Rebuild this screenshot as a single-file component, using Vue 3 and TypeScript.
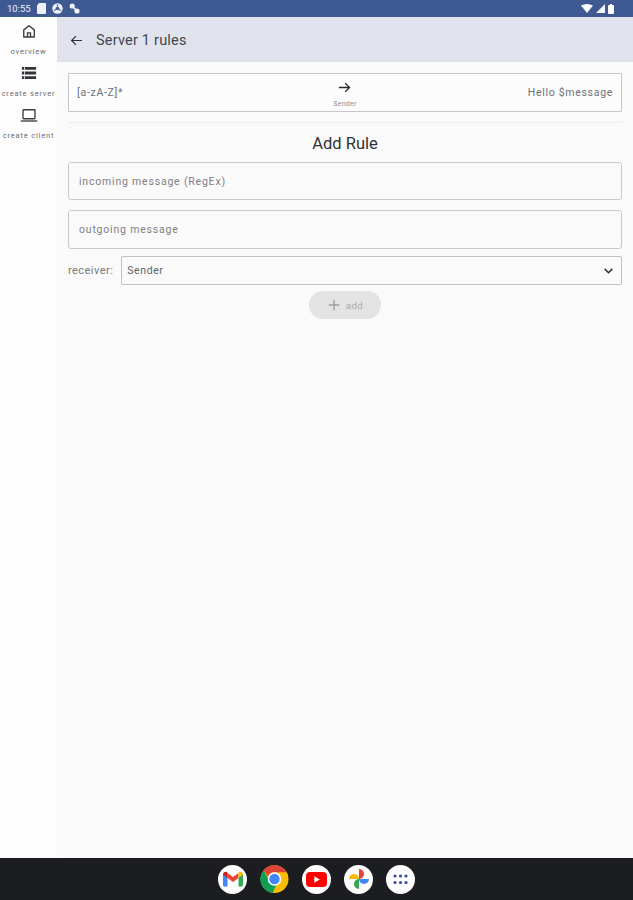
<script setup lang="ts">
const navItems: { label: string; icon: string }[] = [
  { label: 'overview', icon: 'home' },
  { label: 'create server', icon: 'list' },
  { label: 'create client', icon: 'laptop' },
]
</script>

<template>
  <div class="screen">
    <div class="status">
      <div class="status-left">
        <span class="time">10:55</span>
        <svg width="9" height="11" viewBox="0 0 9 11"><path d="M2 0h6a1 1 0 0 1 1 1v9a1 1 0 0 1-1 1H1a1 1 0 0 1-1-1V2.500z" fill="#eef1f8"/></svg>
        <svg width="11" height="11" viewBox="0 0 11 11"><circle cx="5.500" cy="5.500" r="5.200" fill="#eef1f8"/><circle cx="5.500" cy="5.500" r="1.800" fill="#3f5a92"/><path d="M5.500 1.500v2M2 7.500l1.800-1M9 7.500l-1.800-1" stroke="#3f5a92" stroke-width="1.200"/></svg>
        <svg width="11" height="11" viewBox="0 0 11 11"><circle cx="3.200" cy="3" r="2.600" fill="#eef1f8"/><circle cx="8" cy="8" r="2.600" fill="#eef1f8"/><path d="M3.500 3.500 8 8" stroke="#eef1f8" stroke-width="1.600"/></svg>
      </div>
      <div class="status-right">
        <svg width="12" height="9" viewBox="0 0 12 9"><path d="M0 1.500Q6-1.500 12 1.500L6 9z" fill="#fff"/></svg>
        <svg width="9" height="9" viewBox="0 0 9 9"><path d="M9 0v9H0z" fill="#f4f6fb"/></svg>
        <svg width="6" height="10" viewBox="0 0 6 10"><path d="M1 1h1V0h2v1h1a1 1 0 0 1 1 1v7a1 1 0 0 1-1 1H1a1 1 0 0 1-1-1V2a1 1 0 0 1 1-1z" fill="#fff"/></svg>
      </div>
    </div>

    <div class="main">
      <nav class="nav">
        <div v-for="item in navItems" :key="item.label" class="nav-item">
          <svg v-if="item.icon === 'home'" class="nav-icon" width="18" height="18" viewBox="0 0 24 24" fill="none" stroke="#3a3c40" stroke-width="1.800"><path d="M5 10.500 12 5l7 5.500V20H5z" stroke-linejoin="round"/><path d="M10 20v-5.500h4V20" /></svg>
          <svg v-else-if="item.icon === 'list'" class="nav-icon" width="18" height="18" viewBox="0 0 24 24" fill="#33353a"><path d="M2.500 4h3v3.800h-3zM6.500 4h15v3.800h-15zM2.500 10.100h3v3.800h-3zM6.500 10.100h15v3.800h-15zM2.500 16.200h3V20h-3zM6.500 16.200h15V20h-15z"/></svg>
          <svg v-else class="nav-icon" width="18" height="18" viewBox="0 0 24 24" fill="none" stroke="#3a3c40" stroke-width="1.800"><rect x="4" y="5" width="16" height="12" rx="1"/><path d="M1 20h22"/></svg>
          <span class="nav-label">{{ item.label }}</span>
        </div>
      </nav>

      <div class="page">
        <header class="topbar">
          <svg width="13" height="13" viewBox="0 0 24 24" fill="none" stroke="#2c2e33" stroke-width="2.200"><path d="M22 12H3M11 4l-8 8 8 8"/></svg>
          <span class="title">Server 1 rules</span>
        </header>

        <div class="content">
          <div class="rule">
            <span class="rule-in">[a-zA-Z]*</span>
            <div class="rule-mid">
              <svg width="15" height="15" viewBox="0 0 24 24" fill="none" stroke="#26282c" stroke-width="2.200"><path d="M3 12h17M13 5l7 7-7 7"/></svg>
              <span class="rule-recv">Sender</span>
            </div>
            <span class="rule-out">Hello $message</span>
          </div>
          <div class="divider"></div>
          <h2 class="heading">Add Rule</h2>
          <div class="field first">incoming message (RegEx)</div>
          <div class="field second">outgoing message</div>
          <div class="receiver">
            <span class="receiver-label">receiver:</span>
            <div class="select">
              <span>Sender</span>
              <svg width="13" height="13" viewBox="0 0 24 24" fill="none" stroke="#2c2e33" stroke-width="2.800"><path d="M5 9l7 7 7-7"/></svg>
            </div>
          </div>
          <div class="add">
            <svg width="14" height="14" viewBox="0 0 24 24" fill="none" stroke="#9c9d9f" stroke-width="2.200"><path d="M12 3v18M3 12h18"/></svg>
            <span>add</span>
          </div>
        </div>
      </div>
    </div>

    <footer class="dock">
      <div class="app">
        <svg width="20" height="16" viewBox="0 0 20 16"><path d="M0 3v11a1.500 1.500 0 0 0 1.500 1.500H4.500V6z" fill="#4285f4"/><path d="M20 3v11a1.500 1.500 0 0 1-1.500 1.500H15.500V6z" fill="#34a853"/><path d="M4.500 7 10 11l5.500-4V2L10 6 4.500 2z" fill="#ea4335"/><path d="M0 3.500C0 1 3 0 4.500 1.500V7L0 3.500z" fill="#c5221f"/><path d="M20 3.500C20 1 17 0 15.500 1.500V7L20 3.500z" fill="#fbbc04"/></svg>
      </div>
      <div class="app chrome">
        <svg width="30" height="30" viewBox="0 0 30 30"><circle cx="15" cy="15" r="14.500" fill="#fbbc04"/><path d="M15 .5A14.500 14.500 0 0 1 27.600 8H15a7 7 0 0 0-6.500 4.400L3.500 6A14.500 14.500 0 0 1 15 .5z" fill="#db4437"/><path d="M3.500 6 10 17a6 6 0 0 0 7 4L13 29.400A14.500 14.500 0 0 1 3.500 6z" fill="#0f9d58"/><circle cx="15" cy="15" r="7" fill="#fff"/><circle cx="15" cy="15" r="5.400" fill="#4285f4"/></svg>
      </div>
      <div class="app">
        <svg width="21" height="15" viewBox="0 0 21 15"><rect width="21" height="15" rx="4" fill="#f00"/><path d="M8.300 4.300v6.400l5.500-3.200z" fill="#fff"/></svg>
      </div>
      <div class="app">
        <svg width="22" height="22" viewBox="0 0 22 22"><path d="M11 11V1a5 5 0 0 1 0 10z" fill="#ea4335"/><path d="M11 11V1a5 5 0 0 1 0 10z" fill="#4285f4" transform="rotate(90 11 11)"/><path d="M11 11V1a5 5 0 0 1 0 10z" fill="#34a853" transform="rotate(180 11 11)"/><path d="M11 11V1a5 5 0 0 1 0 10z" fill="#fbbc04" transform="rotate(270 11 11)"/></svg>
      </div>
      <div class="app">
        <svg width="15" height="11" viewBox="0 0 15 11" fill="#3c4a9e"><circle cx="2" cy="2" r="1.600"/><circle cx="7.500" cy="2" r="1.600"/><circle cx="13" cy="2" r="1.600"/><circle cx="2" cy="8.500" r="1.600"/><circle cx="7.500" cy="8.500" r="1.600"/><circle cx="13" cy="8.500" r="1.600"/></svg>
      </div>
    </footer>
  </div>
</template>

<style scoped>
.screen {
  width: 633px;
  height: 900px;
  display: flex;
  flex-direction: column;
  overflow: hidden;
  background: #fafafa;
  font-family: Roboto, "Liberation Sans", sans-serif;
  color: #2c2e33;
}
.status {
  height: 17px;
  flex: none;
  background: #3f5a92;
  display: flex;
  align-items: center;
  justify-content: space-between;
  padding: 0 19px 0 7px;
  box-sizing: border-box;
}
.status-left, .status-right {
  display: flex;
  align-items: center;
}
.status-left { gap: 6px; }
.status-right { gap: 3px; }
.time {
  font-size: 9.500px;
  color: #eef1f8;
}
.main {
  flex: 1;
  display: flex;
  min-height: 0;
}
.nav {
  width: 57px;
  flex: none;
  background: #fdfdfd;
  display: flex;
  flex-direction: column;
  padding-top: 5px;
  box-sizing: border-box;
}
.nav-item {
  height: 42px;
  display: flex;
  flex-direction: column;
  align-items: center;
}
.nav-label {
  font-size: 7.500px;
  color: #6a6c70;
  letter-spacing: 0.8px;
  white-space: nowrap;
  margin-top: 7px;
}
.page {
  flex: 1;
  display: flex;
  flex-direction: column;
  min-width: 0;
}
.topbar {
  height: 45px;
  flex: none;
  background: #e1e3ec;
  display: flex;
  align-items: center;
  padding: 1px 0 0 13px;
  gap: 13px;
  box-sizing: border-box;
}
.title {
  font-size: 14.500px;
  color: #44464c;
  letter-spacing: 0.2px;
}
.content {
  padding: 11px 11px 0;
  display: flex;
  flex-direction: column;
}
.rule {
  height: 39px;
  border: 1px solid #c6c7ca;
  box-sizing: border-box;
  display: grid;
  grid-template-columns: 1fr auto 1fr;
  align-items: center;
  padding: 0 8px;
  background: #fcfcfc;
  border-radius: 1px;
}
.rule-in, .rule-out {
  font-size: 10.500px;
  color: #6e7074;
  letter-spacing: 0.7px;
}
.rule-out { text-align: right; }
.rule-mid {
  display: flex;
  flex-direction: column;
  align-items: center;
  gap: 5px;
  transform: translateY(1px);
}
.rule-recv {
  font-size: 7px;
  letter-spacing: 0.3px;
  color: #8a8c8f;
}
.divider {
  height: 1px;
  background: #eeeeef;
  margin-top: 10px;
}
.heading {
  margin: 11px 0 0;
  font-size: 16.500px;
  line-height: 19px;
  font-weight: 400;
  text-align: center;
  color: #303236;
}
.field {
  height: 38px;
  border: 1px solid #c9cacc;
  border-radius: 3px;
  box-sizing: border-box;
  display: flex;
  align-items: center;
  padding-left: 10px;
  margin-top: 10px;
  font-size: 10.500px;
  letter-spacing: 0.8px;
  color: #7f8185;
}
.field.first {
  margin-top: 9px;
}
.field.second {
  height: 39px;
}
.receiver {
  display: flex;
  align-items: center;
  gap: 8px;
  margin-top: 7px;
}
.receiver-label {
  font-size: 11px;
  letter-spacing: 0.45px;
  color: #777a7e;
}
.select {
  flex: 1;
  height: 29px;
  border: 1px solid #bfc0c3;
  border-radius: 2px;
  box-sizing: border-box;
  display: flex;
  align-items: center;
  justify-content: space-between;
  padding: 0 6px 0 5px;
  font-size: 10.500px;
  letter-spacing: 0.6px;
  color: #606266;
}
.add {
  align-self: center;
  width: 72px;
  height: 28px;
  margin-top: 6px;
  border-radius: 14px;
  background: #e3e3e4;
  display: flex;
  align-items: center;
  justify-content: center;
  gap: 5px;
  font-size: 9.500px;
  letter-spacing: 0.5px;
  color: #a9aaac;
}
.dock {
  height: 42px;
  flex: none;
  background: #1c1d20;
  display: flex;
  justify-content: center;
  align-items: center;
  gap: 13px;
  box-sizing: border-box;
}
.app {
  width: 29px;
  height: 29px;
  border-radius: 50%;
  background: #fdfdfd;
  display: flex;
  align-items: center;
  justify-content: center;
  overflow: hidden;
}
.app.chrome {
  background: none;
}
</style>
